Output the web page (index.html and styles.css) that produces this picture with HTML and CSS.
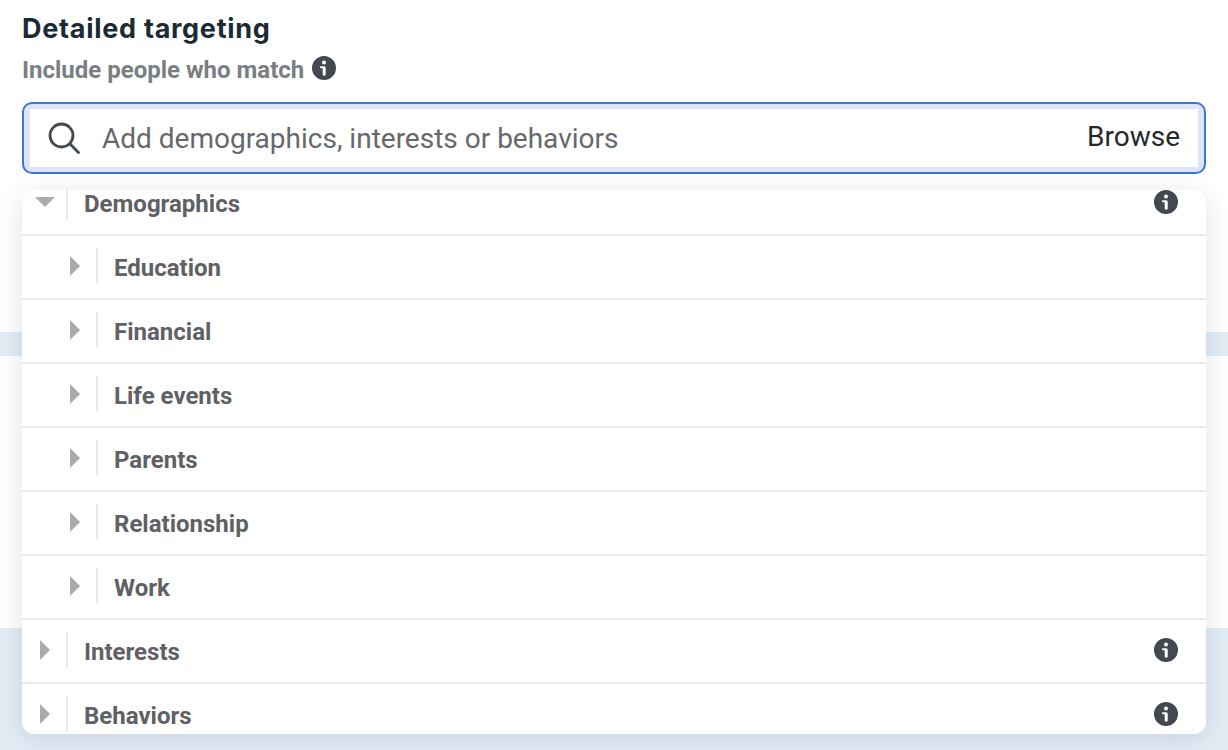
FILE: index.html
```html
<!DOCTYPE html>
<html lang="en">
<head>
<meta charset="utf-8">
<title>Detailed targeting</title>
<link rel="stylesheet" href="styles.css">
</head>
<body>
<div class="backdrop">
  <div class="band band-one"></div>
  <div class="band band-two"></div>
</div>
<main class="panel">
  <h1 class="title">Detailed targeting</h1>
  <div class="subtitle">
    <span class="subtitle-text">Include people who match</span>
    <svg class="info" viewBox="0 0 24 24"><use href="#i-info"/></svg>
  </div>
  <div class="search">
    <div class="search-inner">
      <svg class="search-icon" viewBox="0 0 32 32" fill="none" stroke="#444950" stroke-width="2.8" stroke-linecap="round"><circle cx="13.5" cy="13.5" r="11.500"/><path d="M21.800 21.800 L30.500 30.500"/></svg>
      <span class="placeholder">Add demographics, interests or behaviors</span>
      <span class="browse">Browse</span>
    </div>
  </div>
  <div class="menu">
    <div class="list">
      <div class="row">
        <span class="toggle"><i class="tri-down"></i></span><span class="label">Demographics</span>
        <svg class="info" viewBox="0 0 24 24"><use href="#i-info"/></svg>
      </div>
      <div class="row sub"><span class="toggle"><i class="tri-right"></i></span><span class="label">Education</span></div>
      <div class="row sub"><span class="toggle"><i class="tri-right"></i></span><span class="label">Financial</span></div>
      <div class="row sub"><span class="toggle"><i class="tri-right"></i></span><span class="label">Life events</span></div>
      <div class="row sub"><span class="toggle"><i class="tri-right"></i></span><span class="label">Parents</span></div>
      <div class="row sub"><span class="toggle"><i class="tri-right"></i></span><span class="label">Relationship</span></div>
      <div class="row sub"><span class="toggle"><i class="tri-right"></i></span><span class="label">Work</span></div>
      <div class="row">
        <span class="toggle"><i class="tri-right"></i></span><span class="label">Interests</span>
        <svg class="info" viewBox="0 0 24 24"><use href="#i-info"/></svg>
      </div>
      <div class="row">
        <span class="toggle"><i class="tri-right"></i></span><span class="label">Behaviors</span>
        <svg class="info" viewBox="0 0 24 24"><use href="#i-info"/></svg>
      </div>
    </div>
  </div>
</main>
<svg class="defs" width="0" height="0">
  <symbol id="i-info" viewBox="0 0 24 24">
    <path fill="#444950" fill-rule="evenodd" d="M12 0a12 12 0 1 0 0 24a12 12 0 0 0 0-24zM12 4.400a2 2 0 1 1 0 4a2 2 0 0 1 0-4zM9 10.200h3.200a1.500 1.500 0 0 1 1.500 1.500V18.300a1.500 1.500 0 0 1-3 0V12.200H9a1 1 0 0 1 0-2z"/>
  </symbol>
</svg>
</body>
</html>
```
FILE: styles.css
```css
* { box-sizing: border-box; }
html, body { margin: 0; height: 100%; }
body {
  width: 1228px;
  height: 750px;
  overflow: hidden;
  background: #fff;
  font-family: Roboto, "Liberation Sans", sans-serif;
  position: relative;
}
.backdrop { position: absolute; inset: 0; }
.band { position: absolute; left: 0; right: 0; background: #e2ecf5; }
.band-one { top: 332px; height: 24px; }
.band-two { top: 628px; bottom: 0; }
.panel { position: relative; padding: 13px 22px 0; }
.title {
  margin: 0;
  font-family: Inter, Roboto, sans-serif;
  font-size: 27px;
  letter-spacing: .72px;
  line-height: 32px;
  font-weight: 700;
  color: #1c2b33;
}
.subtitle {
  display: flex;
  align-items: center;
  gap: 8px;
  margin-top: 7px;
  height: 32px;
  font-size: 24px;
  font-weight: 700;
  color: #7b7e82;
}
.subtitle-text { margin-top: 4px; }
.info { width: 24px; height: 24px; display: block; flex: none; }
.search {
  margin-top: 18px;
  width: 1184px;
  height: 72px;
  border: 2px solid #3f73d6;
  border-radius: 10px;
  background: #dfe5f8;
  padding: 5px 6px;
}
.search-inner {
  height: 58px;
  background: #fff;
  display: flex;
  align-items: center;
  padding: 0 18px;
}
.search-icon { width: 32px; height: 32px; flex: none; margin-right: 22px; }
.placeholder { flex: 1; font-size: 28px; color: #65686c; }
.browse { font-size: 28px; color: #26282b; margin-top: -3px; }
.menu {
  margin-top: 16px;
  width: 1184px;
  height: 544px;
  background: #fff;
  border-radius: 12px;
  box-shadow: 0 4px 24px rgba(40, 50, 70, .14);
  overflow: hidden;
}
.list { margin-top: -18px; }
.row {
  height: 64px;
  border-bottom: 2px solid #ebebeb;
  display: flex;
  align-items: center;
  padding: 0 28px 2px 0;
}
.toggle {
  width: 46px;
  height: 36px;
  border-right: 2px solid #ebebeb;
  display: flex;
  align-items: center;
  justify-content: center;
  flex: none;
  padding-left: 2px;
}
.sub .toggle { margin-left: 30px; }
.tri-right {
  display: block;
  border-left: 10px solid #ababab;
  border-top: 10px solid transparent;
  border-bottom: 10px solid transparent;
}
.tri-down {
  display: block;
  border-top: 10px solid #ababab;
  border-left: 10px solid transparent;
  border-right: 10px solid transparent;
}
.label {
  margin-left: 16px;
  flex: 1;
  font-size: 24px;
  font-weight: 700;
  color: #5f6164;
  padding-top: 4px;
}
.defs { position: absolute; }
```
